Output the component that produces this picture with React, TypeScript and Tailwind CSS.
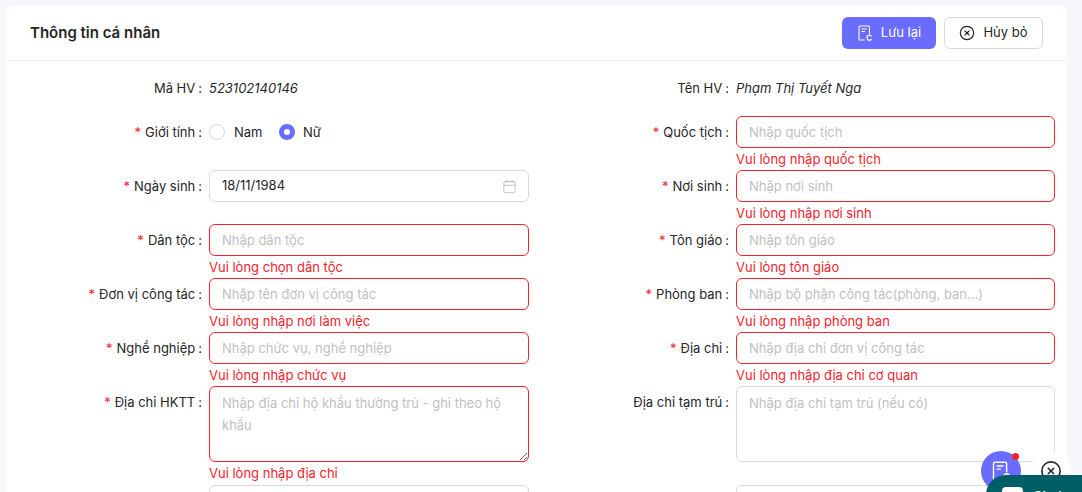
import { Calendar, CircleX } from 'lucide-react';

type FieldProps = {
  label: string;
  required?: boolean;
  placeholder?: string;
  error?: string;
  right?: boolean;
};

function SaveIcon({ className }: { className: string }) {
  return (
    <svg viewBox="0 0 16 16" fill="none" stroke="currentColor" strokeWidth="1.1" className={className}>
      <path d="M7.5 15H3a1 1 0 0 1-1-1V2a1 1 0 0 1 1-1h8.5a1 1 0 0 1 1 1v7" />
      <path d="M4.5 4h5.5M4.5 6.5h3.5" />
      <path d="M14.6 11.4a2.5 2.5 0 1 0 0 2.7" strokeWidth="1.3" />
    </svg>
  );
}

function Label({ label, required }: { label: string; required?: boolean }) {
  return (
    <label className="w-[203px] shrink-0 pr-[7px] text-right text-[#262626] leading-8">
      {required && <span className="text-[#f5222d] mr-1">*</span>}
      {label}
      <span className="ml-[3px]">:</span>
    </label>
  );
}

function Field({ label, required, placeholder, error, right }: FieldProps) {
  return (
    <div className="flex h-[54px]">
      <Label label={label} required={required} />
      <div className={right ? 'w-[319px]' : 'w-[320px]'}>
        <input
          placeholder={placeholder}
          className={`w-full h-8 px-3 rounded-[6px] border outline-none placeholder:text-[#bfbfbf] ${
            error ? 'border-[#f5222d]' : 'border-[#d9d9d9]'
          }`}
        />
        {error && <div className="text-[#f5222d] leading-[22px] -mt-px pt-px">{error}</div>}
      </div>
    </div>
  );
}

function AreaField({ label, required, placeholder, error, right }: FieldProps) {
  return (
    <div className="flex h-[99px]">
      <Label label={label} required={required} />
      <div className={right ? 'w-[319px]' : 'w-[320px]'}>
        <textarea
          placeholder={placeholder}
          className={`block w-full h-[76px] px-3 py-[5px] leading-[22px] rounded-[6px] border outline-none placeholder:text-[#bfbfbf] ${
            error ? 'border-[#f5222d]' : 'border-[#d9d9d9]'
          }`}
        />
        {error && <div className="text-[#f5222d] leading-[22px]">{error}</div>}
      </div>
    </div>
  );
}

export default function App() {
  return (
    <div className="relative h-[492px] w-[1082px] overflow-hidden bg-[#f5f7fa] pt-[5px] pl-[6px] font-['Inter',sans-serif] text-[13px] text-[#262626]">
      <div className="w-[1061px] rounded-t-lg bg-white">
        <div className="flex h-[56px] items-center justify-between border-b border-[#f0f0f0] pl-6 pr-6">
          <h1 className="pt-0.5 text-[15px] font-semibold">Thông tin cá nhân</h1>
          <div className="flex gap-2">
            <button className="flex h-8 w-[94px] items-center justify-center gap-2 rounded-[6px] bg-[#696cff] text-white">
              <SaveIcon className="h-4 w-4" />
              Lưu lại
            </button>
            <button className="flex h-8 w-[99px] items-center justify-center gap-2 rounded-[6px] border border-[#d9d9d9] bg-white">
              <CircleX className="h-4 w-4" strokeWidth={1.75} />
              Hủy bỏ
            </button>
          </div>
        </div>

        <div className="grid grid-cols-2 pr-[7px] pt-[11px]">
          <div className="flex h-[44px]">
            <Label label="Mã HV" />
            <span className="italic leading-8">523102140146</span>
          </div>
          <div className="flex h-[44px]">
            <Label label="Tên HV" />
            <span className="italic leading-8">Phạm Thị Tuyết Nga</span>
          </div>

          <div className="flex h-[54px]">
            <Label label="Giới tính" required />
            <div className="flex h-8 items-center">
              <span className="h-4 w-4 rounded-full border border-[#d9d9d9]" />
              <span className="ml-[9px] w-[45px] leading-8">Nam</span>
              <span className="h-4 w-4 rounded-full border-[5px] border-[#696cff]" />
              <span className="ml-2 leading-8">Nữ</span>
            </div>
          </div>
          <Field right label="Quốc tịch" required placeholder="Nhập quốc tịch" error="Vui lòng nhập quốc tịch" />

          <div className="flex h-[54px]">
            <Label label="Ngày sinh" required />
            <div className="flex h-8 w-[320px] items-center justify-between rounded-[6px] border border-[#d9d9d9] pl-3 pr-[11px]">
              <span>18/11/1984</span>
              <Calendar className="h-[15px] w-[15px] text-[#bfbfbf]" strokeWidth={1.5} />
            </div>
          </div>
          <Field right label="Nơi sinh" required placeholder="Nhập nơi sinh" error="Vui lòng nhập nơi sinh" />

          <Field label="Dân tộc" required placeholder="Nhập dân tộc" error="Vui lòng chọn dân tộc" />
          <Field right label="Tôn giáo" required placeholder="Nhập tôn giáo" error="Vui lòng tôn giáo" />

          <Field label="Đơn vị công tác" required placeholder="Nhập tên đơn vị công tác" error="Vui lòng nhập nơi làm việc" />
          <Field right label="Phòng ban" required placeholder="Nhập bộ phận công tác(phòng, ban...)" error="Vui lòng nhập phòng ban" />

          <Field label="Nghề nghiệp" required placeholder="Nhập chức vụ, nghề nghiệp" error="Vui lòng nhập chức vụ" />
          <Field right label="Địa chỉ" required placeholder="Nhập địa chỉ đơn vị công tác" error="Vui lòng nhập địa chỉ cơ quan" />

          <AreaField label="Địa chỉ HKTT" required placeholder="Nhập địa chỉ hộ khẩu thường trú - ghi theo hộ khẩu" error="Vui lòng nhập địa chỉ" />
          <AreaField right label="Địa chỉ tạm trú" placeholder="Nhập địa chỉ tạm trú (nếu có)" />

          <div className="flex h-[54px] pl-[203px]">
            <input className="h-8 w-[320px] rounded-[6px] border border-[#d9d9d9] outline-none" />
          </div>
          <div className="flex h-[54px] pl-[203px]">
            <input className="h-8 w-[319px] rounded-[6px] border border-[#d9d9d9] outline-none" />
          </div>
        </div>
      </div>

      {/* floating widgets */}
      <div className="absolute left-[981px] top-[451px] flex h-10 w-10 items-center justify-center rounded-full bg-[#696cff] text-white">
        <SaveIcon className="h-5 w-5" />
        <span className="absolute right-[2px] top-[2px] h-[7px] w-[7px] rounded-full bg-[#f5222d]" />
      </div>
      <div className="absolute left-[1031px] top-[451px] flex h-10 w-10 items-center justify-center rounded-full bg-white pb-[1px]">
        <CircleX className="h-[22px] w-[22px]" strokeWidth={1.75} />
      </div>
      <div className="absolute left-[986px] top-[475px] flex h-10 w-[120px] items-start gap-[10px] rounded-[20px] bg-[#005f66] pl-4 pt-3 font-semibold leading-4 text-white">
        <span className="h-4 w-[21px] rounded bg-white" />
        <span className="pt-px">Chat</span>
      </div>
    </div>
  );
}
